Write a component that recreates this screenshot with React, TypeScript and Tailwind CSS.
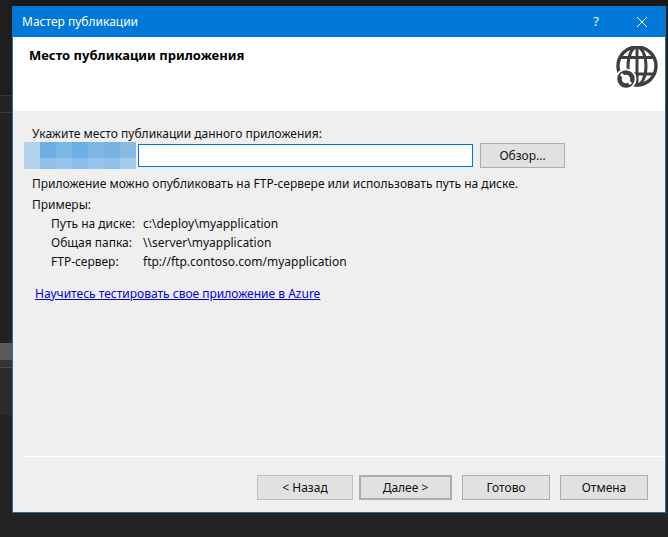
const font = "font-['Noto_Sans','Open_Sans',sans-serif]"

const mosaicTop = ['bg-[#b3d3ee]', 'bg-[#6caee3]', 'bg-[#7ab6e6]', 'bg-[#6caee3]', 'bg-[#7ab6e6]', 'bg-[#76b3e5]', 'bg-[#8ab9e0]']
const mosaicBottom = ['bg-[#b3d3ee]', 'bg-[#8fc0ea]', 'bg-[#97c5eb]', 'bg-[#8abdea]', 'bg-[#97c5eb]', 'bg-[#8fc0ea]', 'bg-[#a5cbec]']

function WizardButton({ label, className = '' }: { label: string; className?: string }) {
  return (
    <button className={`h-[25px] border border-[#adadad] bg-[#e1e1e1] text-[12px] text-[#111] ${className}`}>
      {label}
    </button>
  )
}

function GlobeIcon() {
  return (
    <svg width="44" height="44" viewBox="0 0 44 44" fill="none" stroke="#3f3f3f">
      <circle cx="23" cy="20" r="19" strokeWidth="3.4" />
      <ellipse cx="23" cy="20" rx="9" ry="19" strokeWidth="3" />
      <path d="M6 11.5h34M6 28h34M23 1v38" strokeWidth="3" />
      <circle cx="12" cy="33" r="10.5" fill="#fff" stroke="none" />
      <circle cx="12" cy="33" r="6.5" strokeWidth="4.5" />
      <path d="M7 28l10 10" stroke="#fff" strokeWidth="3" />
    </svg>
  )
}

export default function App() {
  return (
    <div className={`flex h-[537px] w-[668px] overflow-hidden bg-[#232323] ${font}`}>
      <div className="flex w-[12px] shrink-0 flex-col">
        <div className="h-[95px] bg-[#1e1e1e]" />
        <div className="h-[1px] bg-[#333]" />
        <div className="h-[16px] bg-[#232323]" />
        <div className="h-[1px] bg-[#3a3a3a]" />
        <div className="h-[230px] bg-[#222]" />
        <div className="h-[17px] bg-[#5a5a5a]" />
        <div className="h-[7px] bg-[#343434]" />
        <div className="h-[1px] bg-[#4a4a4a]" />
        <div className="h-[47px] bg-[#2b2b2b]" />
        <div className="flex-1 bg-[#232323]" />
      </div>

      <div className="flex min-w-0 flex-1 flex-col">
        <div className="h-[6px] shrink-0 bg-[#191919]" />
        <div className="flex h-[507px] w-[654px] flex-col border border-t-0 border-[#2a6ea8]">
          <div className="flex h-[31px] shrink-0 items-center justify-between bg-[#0078d7] pl-[9px] text-white">
            <span className="text-[12px]">Мастер публикации</span>
            <div className="flex items-center">
              <span className="w-[46px] text-center text-[13px]">?</span>
              <svg width="46" height="12" viewBox="0 0 46 12" stroke="#fff" strokeWidth="1">
                <path d="M18 1l10 10M28 1L18 11" />
              </svg>
            </div>
          </div>

          <div className="flex h-[74px] shrink-0 items-start justify-between bg-white pl-[16px] pr-[7px] pt-[9px]">
            <h1 className="text-[13px] font-bold text-black">Место публикации приложения</h1>
            <GlobeIcon />
          </div>

          <div className="flex flex-1 flex-col bg-[#efefef] pl-[11px] text-[12px] text-[#111]">
            <div className="pl-[8px] pt-[14px] leading-[17px]">Укажите место публикации данного приложения:</div>
            <div className="flex h-[27px] items-center">
              <div className="flex h-[27px] w-[112px] flex-col">
                <div className="flex h-[16px]">
                  {mosaicTop.map((c, i) => <div key={i} className={`h-full w-[16px] ${c}`} />)}
                </div>
                <div className="flex flex-1">
                  {mosaicBottom.map((c, i) => <div key={i} className={`h-full w-[16px] ${c}`} />)}
                </div>
              </div>
              <div className="ml-[2px] h-[23px] w-[335px] border border-[#0078d7] bg-white" />
              <WizardButton label="Обзор..." className="ml-[7px] w-[85px]" />
            </div>

            <div className="pl-[8px] pt-[6px] leading-[17px]">
              Приложение можно опубликовать на FTP-сервере или использовать путь на диске.
            </div>
            <div className="pl-[8px] pt-[4px] leading-[17px]">Примеры:</div>
            <div className="grid grid-cols-[92px_1fr] pl-[27px] pt-[1px] leading-[19px]">
              <span>Путь на диске:</span><span>c:\deploy\myapplication</span>
              <span>Общая папка:</span><span>\\server\myapplication</span>
              <span>FTP-сервер:</span><span>ftp://ftp.contoso.com/myapplication</span>
            </div>
            <a className="ml-[11px] mt-[14px] self-start leading-[17px] text-[#0000e0] underline">
              Научитесь тестировать свое приложение в Azure
            </a>

            <div className="mt-auto flex h-[56px] shrink-0 justify-end gap-[6px] border-t border-white pr-[17px] pt-[18px]">
              <WizardButton label="< Назад" className="w-[96px] border-[#bfbfbf] bg-[#cccccc] text-[#8a8a8a]" />
              <WizardButton label="Далее >" className="ml-[0px] w-[93px] border-2 border-[#0078d7]" />
              <WizardButton label="Готово" className="ml-[4px] w-[88px]" />
              <WizardButton label="Отмена" className="ml-[4px] w-[88px]" />
            </div>
          </div>
        </div>
      </div>
    </div>
  )
}
